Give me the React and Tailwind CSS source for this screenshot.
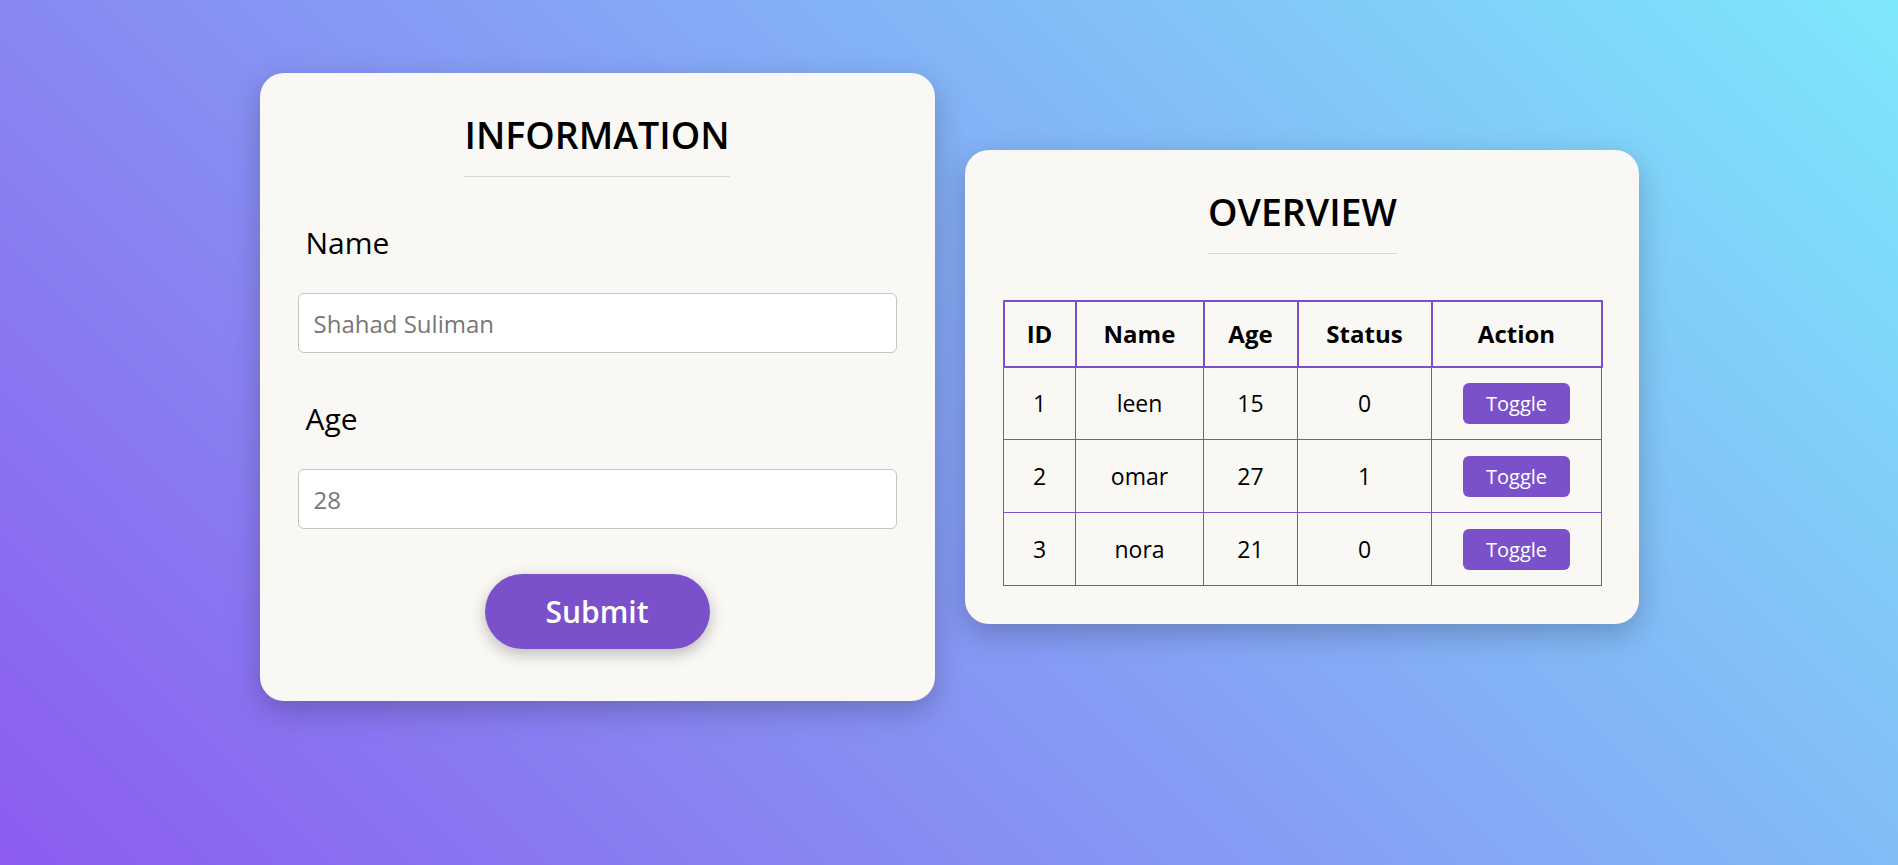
import { useState } from 'react'

const PURPLE = 'bg-[#7b51cb]'

function Title({ children }) {
  return (
    <div className="text-center">
      <h2 className="inline-block text-[37.5px] leading-[52px] font-semibold text-black pb-[15px] border-b border-[#d6d6d6]">
        {children}
      </h2>
    </div>
  )
}

export default function App() {
  const [rows, setRows] = useState([
    { id: 1, name: 'leen', age: 15, status: 0 },
    { id: 2, name: 'omar', age: 27, status: 1 },
    { id: 3, name: 'nora', age: 21, status: 0 },
  ])

  const toggle = id => setRows(rs => rs.map(r => (r.id === id ? { ...r, status: r.status ? 0 : 1 } : r)))

  return (
    <div className="min-h-screen w-full bg-[linear-gradient(45deg,#8c5cef,#7ee8fb)] font-['Open_Sans',sans-serif] flex justify-center items-start pt-[73px]">
      <div className="flex items-center gap-[30px]">
        {/* form card */}
        <div className="w-[675px] bg-[#faf8f5] rounded-[24px] px-[38px] pt-[36px] pb-[52px] shadow-[0_10px_30px_rgba(0,0,0,0.22)]">
          <Title>INFORMATION</Title>
          <label className="block mt-[46px] ml-[8px] text-[30px] leading-[40px] text-black">Name</label>
          <input
            className="block w-full mt-[30px] h-[60px] px-[15px] text-[24px] bg-white border border-[#c6c6c6] rounded-[6px] outline-none placeholder:text-[#777]"
            placeholder="Shahad Suliman"
          />
          <label className="block mt-[46px] ml-[8px] text-[30px] leading-[40px] text-black">Age</label>
          <input
            className="block w-full mt-[30px] h-[60px] px-[15px] text-[24px] bg-white border border-[#c6c6c6] rounded-[6px] outline-none placeholder:text-[#777]"
            placeholder="28"
          />
          <button className={`block mx-auto mt-[45px] w-[225px] h-[75px] rounded-full ${PURPLE} text-white text-[30px] font-semibold shadow-[0_5px_15px_rgba(0,0,0,0.25)]`}>
            Submit
          </button>
        </div>

        {/* table card */}
        <div className="w-[674px] bg-[#faf8f5] rounded-[24px] pl-[38px] pr-[36px] pt-[36px] pb-[38px] shadow-[0_10px_30px_rgba(0,0,0,0.22)]">
          <Title>OVERVIEW</Title>
          <table className="w-full mt-[46px] table-fixed border-collapse text-black">
            <thead>
              <tr>
                <th className="w-[72px] h-[66px] border-2 border-[#7b51cb] text-[24px] font-bold">ID</th>
                <th className="w-[128px] h-[66px] border-2 border-[#7b51cb] text-[24px] font-bold">Name</th>
                <th className="w-[94px] h-[66px] border-2 border-[#7b51cb] text-[24px] font-bold">Age</th>
                <th className="w-[134px] h-[66px] border-2 border-[#7b51cb] text-[24px] font-bold">Status</th>
                <th className="h-[66px] border-2 border-[#7b51cb] text-[24px] font-bold">Action</th>
              </tr>
            </thead>
            <tbody>
              {rows.map(r => (
                <tr key={r.id}>
                  <td className="h-[73px] border border-[#7b51cb] text-center text-[23px]">{r.id}</td>
                  <td className="h-[73px] border border-[#7b51cb] text-center text-[23px]">{r.name}</td>
                  <td className="h-[73px] border border-[#7b51cb] text-center text-[23px]">{r.age}</td>
                  <td className="h-[73px] border border-[#7b51cb] text-center text-[23px]">{r.status}</td>
                  <td className="h-[73px] border border-[#7b51cb] text-center">
                    <button
                      onClick={() => toggle(r.id)}
                      className={`${PURPLE} text-white text-[20px] leading-[27px] px-[23px] py-[7px] rounded-[6px]`}
                    >
                      Toggle
                    </button>
                  </td>
                </tr>
              ))}
            </tbody>
          </table>
        </div>
      </div>
    </div>
  )
}
